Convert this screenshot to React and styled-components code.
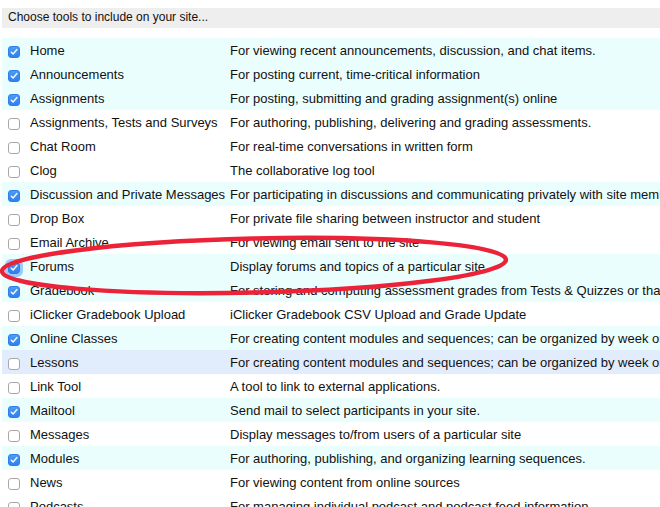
import React from 'react';
import styled, { createGlobalStyle } from 'styled-components';

const GlobalStyle = createGlobalStyle`
    html, body {
        margin: 0;
        padding: 0;
        background: #fff;
    }
    body {
        width: 660px;
        height: 507px;
        overflow: hidden;
        font-family: "Liberation Sans", Arial, Helvetica, sans-serif;
        color: #111;
    }
`;

const tools = [
    { name: 'Home', desc: 'For viewing recent announcements, discussion, and chat items.', on: true },
    { name: 'Announcements', desc: 'For posting current, time-critical information', on: true },
    { name: 'Assignments', desc: 'For posting, submitting and grading assignment(s) online', on: true },
    { name: 'Assignments, Tests and Surveys', desc: 'For authoring, publishing, delivering and grading assessments.' },
    { name: 'Chat Room', desc: 'For real-time conversations in written form' },
    { name: 'Clog', desc: 'The collaborative log tool' },
    { name: 'Discussion and Private Messages', desc: 'For participating in discussions and communicating privately with site members', on: true },
    { name: 'Drop Box', desc: 'For private file sharing between instructor and student' },
    { name: 'Email Archive', desc: 'For viewing email sent to the site' },
    { name: 'Forums', desc: 'Display forums and topics of a particular site', on: true, focus: true },
    { name: 'Gradebook', desc: 'For storing and computing assessment grades from Tests & Quizzes or that are manually entered.', on: true },
    { name: 'iClicker Gradebook Upload', desc: 'iClicker Gradebook CSV Upload and Grade Update' },
    { name: 'Online Classes', desc: 'For creating content modules and sequences; can be organized by week or topic', on: true },
    { name: 'Lessons', desc: 'For creating content modules and sequences; can be organized by week or topic', hover: true },
    { name: 'Link Tool', desc: 'A tool to link to external applications.' },
    { name: 'Mailtool', desc: 'Send mail to select participants in your site.', on: true },
    { name: 'Messages', desc: 'Display messages to/from users of a particular site' },
    { name: 'Modules', desc: 'For authoring, publishing, and organizing learning sequences.', on: true },
    { name: 'News', desc: 'For viewing content from online sources' },
    { name: 'Podcasts', desc: 'For managing individual podcast and podcast feed information' },
];

const App = () => {
    return (
        <>
            <GlobalStyle />
            <Page>
                <Header>Choose tools to include on your site...</Header>
                <List>
                    {tools.map((t) => (
                        <Row key={t.name} $on={t.on} $hover={t.hover}>
                            <BoxCell>
                                <Check $on={t.on} $focus={t.focus}>
                                    {t.on && (
                                        <svg width="8" height="8" viewBox="0 0 8 8">
                                            <path d="M1.3 4.2 L3.2 6 L6.8 1.6" fill="none" stroke="#fff" strokeWidth="1.4" strokeLinecap="round" strokeLinejoin="round" />
                                        </svg>
                                    )}
                                </Check>
                            </BoxCell>
                            <Name>{t.name}</Name>
                            <Desc>{t.desc}</Desc>
                        </Row>
                    ))}
                </List>
                <Mark width="660" height="507" viewBox="0 0 660 507">
                    <ellipse cx="254" cy="265.5" rx="252" ry="27" transform="rotate(-1.3 254 265.5)" fill="none" stroke="#ec2239" strokeWidth="4.5" />
                </Mark>
            </Page>
        </>
    );
};

const Page = styled.div`
    position: relative;
    width: 660px;
    height: 507px;
    padding: 8px 0 0 2px;
    box-sizing: border-box;
    overflow: hidden;
`;

const Header = styled.div`
    height: 20px;
    line-height: 19px;
    background-color: #eeeeee;
    padding-left: 6px;
    font-size: 12px;
    color: #111;
`;

const List = styled.div`
    margin-top: 10px;
    display: flex;
    flex-direction: column;
`;

const Row = styled.div`
    display: flex;
    align-items: center;
    height: 24px;
    white-space: nowrap;
    font-size: 13px;
    background-color: ${(p) => (p.$hover ? '#e1edfc' : p.$on ? '#ebfefe' : '#fff')};
`;

const BoxCell = styled.div`
    width: 28px;
    flex: none;
    display: flex;
    align-items: center;
    padding-left: 6px;
    box-sizing: border-box;
    padding-top: 3px;
`;

const Check = styled.span`
    width: 12px;
    height: 12px;
    box-sizing: border-box;
    border-radius: 3px;
    display: flex;
    align-items: center;
    justify-content: center;
    background: ${(p) => (p.$on ? 'linear-gradient(#4b9bf8, #2f80f0)' : '#fff')};
    border: 1px solid ${(p) => (p.$on ? '#2f7fe6' : '#a8a8a8')};
    box-shadow: ${(p) => (p.$focus ? '0 0 0 3px rgba(90, 160, 250, 0.55)' : 'none')};
`;

const Name = styled.div`
    width: 200px;
    flex: none;
    overflow: hidden;
`;

const Desc = styled.div`
    flex: none;
`;

const Mark = styled.svg`
    position: absolute;
    top: 0;
    left: 0;
    pointer-events: none;
`;

export default App;
